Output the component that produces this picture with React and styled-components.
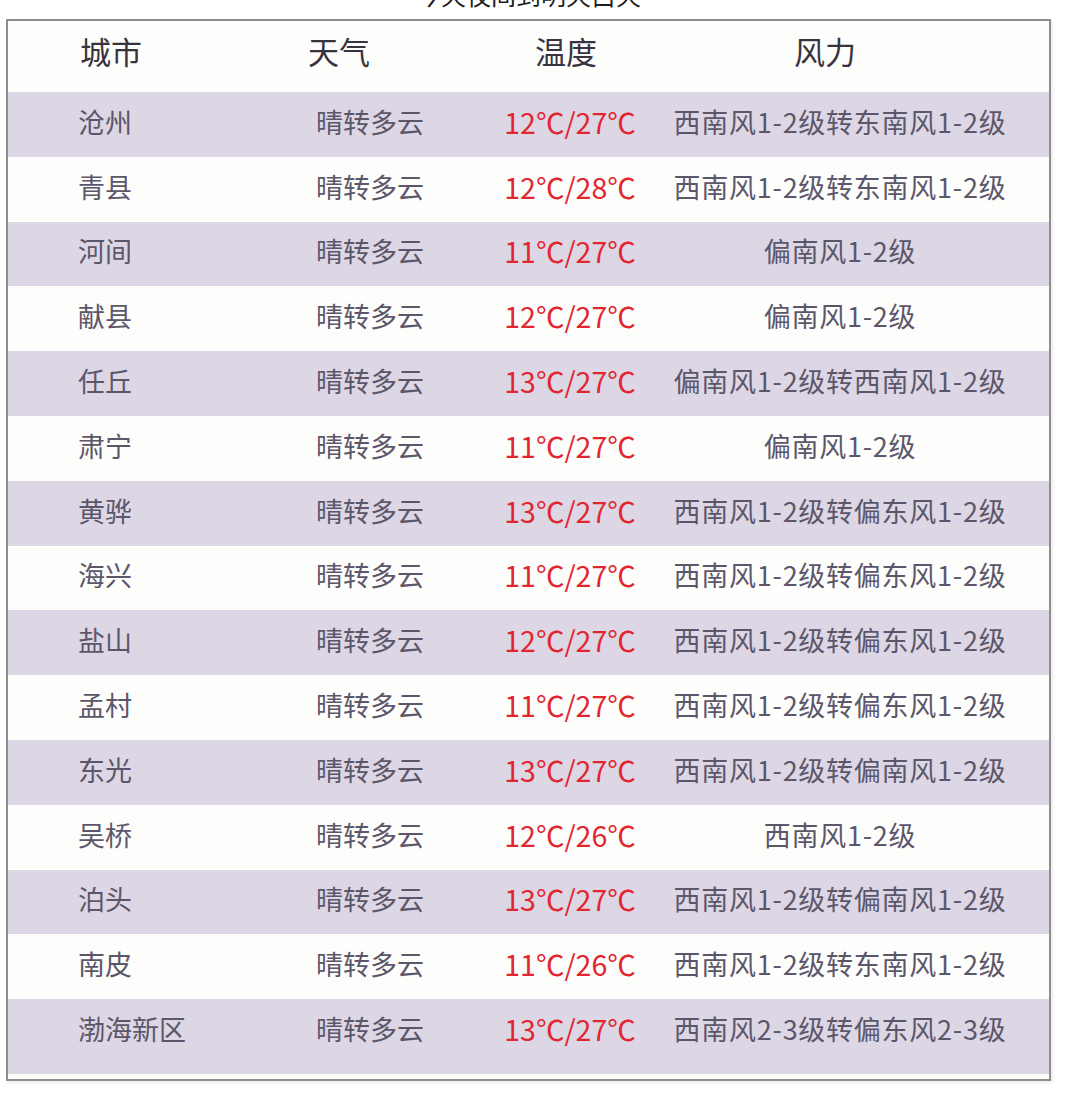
import React from "react";
import styled, { createGlobalStyle } from "styled-components";

const GlobalStyle = createGlobalStyle`
  html, body { margin: 0; padding: 0; background: #ffffff; }
  body { font-family: "Noto Sans CJK SC", "Noto Sans", sans-serif; overflow: hidden; }
`;

const Page = styled.div`
  width: 1080px;
  height: 1096px;
  padding-left: 6px;
  box-sizing: border-box;
  overflow: hidden;
`;

const Title = styled.div`
  width: 1045px;
  margin: -21px 0 10px;
  font-size: 25px;
  line-height: 30px;
  text-align: center;
  color: #1e1e1e;
`;

const Box = styled.div`
  width: 1045px;
  box-sizing: border-box;
  border: 2px solid #8e8e8e;
  background: #fdfdfb;
  padding-bottom: 5px;
  box-shadow: 2px 2px 3px rgba(0, 0, 0, 0.08);
`;

const Row = styled.div`
  display: grid;
  grid-template-columns: 222px 240px 200px 340px 1fr;
  align-items: center;
  height: ${(p) => p.$h}px;
  padding-bottom: ${(p) => p.$extra || 0}px;
  background: ${(p) => (p.$shaded ? "#dcd6e5" : "transparent")};
`;

const HeadCell = styled.div`
  font-size: 31px;
  color: #39333f;
  text-align: ${(p) => p.$align};
  padding-left: ${(p) => p.$pl || 0}px;
  padding-right: ${(p) => p.$pr || 0}px;
  padding-bottom: 12px;
  white-space: nowrap;
`;

const Cell = styled.div`
  font-size: ${(p) => p.$size || 27}px;
  color: ${(p) => (p.$red ? "#e2262f" : "#5c566a")};
  text-align: ${(p) => p.$align};
  padding-left: ${(p) => p.$pl || 0}px;
  padding-bottom: 6px;
  white-space: nowrap;
  letter-spacing: ${(p) => p.$ls || 0}px;
`;

const data = [
  ["沧州", "晴转多云", "12℃/27℃", "西南风1-2级转东南风1-2级"],
  ["青县", "晴转多云", "12℃/28℃", "西南风1-2级转东南风1-2级"],
  ["河间", "晴转多云", "11℃/27℃", "偏南风1-2级"],
  ["献县", "晴转多云", "12℃/27℃", "偏南风1-2级"],
  ["任丘", "晴转多云", "13℃/27℃", "偏南风1-2级转西南风1-2级"],
  ["肃宁", "晴转多云", "11℃/27℃", "偏南风1-2级"],
  ["黄骅", "晴转多云", "13℃/27℃", "西南风1-2级转偏东风1-2级"],
  ["海兴", "晴转多云", "11℃/27℃", "西南风1-2级转偏东风1-2级"],
  ["盐山", "晴转多云", "12℃/27℃", "西南风1-2级转偏东风1-2级"],
  ["孟村", "晴转多云", "11℃/27℃", "西南风1-2级转偏东风1-2级"],
  ["东光", "晴转多云", "13℃/27℃", "西南风1-2级转偏南风1-2级"],
  ["吴桥", "晴转多云", "12℃/26℃", "西南风1-2级"],
  ["泊头", "晴转多云", "13℃/27℃", "西南风1-2级转偏南风1-2级"],
  ["南皮", "晴转多云", "11℃/26℃", "西南风1-2级转东南风1-2级"],
  ["渤海新区", "晴转多云", "13℃/27℃", "西南风2-3级转偏东风2-3级"],
];

export default function App() {
  return (
    <Page>
      <GlobalStyle />
      <Title>今天夜间到明天白天</Title>
      <Box>
        <Row $h={71}>
          <HeadCell $align="left" $pl={72}>城市</HeadCell>
          <HeadCell $align="left" $pl={78}>天气</HeadCell>
          <HeadCell $align="center" $pr={8}>温度</HeadCell>
          <HeadCell $align="center" $pr={30}>风力</HeadCell>
          <div />
        </Row>
        {data.map((r, i) => (
          <Row key={r[0]} $h={64.8} $shaded={i % 2 === 0} $extra={i === data.length - 1 ? 10 : 0}>
            <Cell $align="left" $pl={70}>{r[0]}</Cell>
            <Cell $align="left" $pl={86}>{r[1]}</Cell>
            <Cell $align="center" $red $size={28.5}>{r[2]}</Cell>
            <Cell $align="center" $ls={0.75}>{r[3]}</Cell>
            <div />
          </Row>
        ))}
      </Box>
    </Page>
  );
}
